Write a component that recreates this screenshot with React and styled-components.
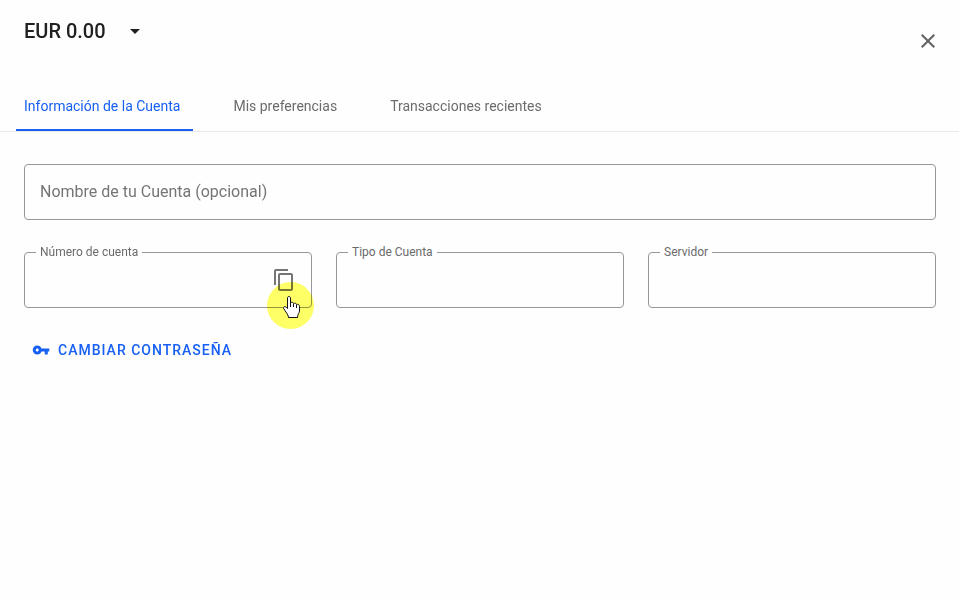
import styled, { createGlobalStyle } from "styled-components";
import { MdArrowDropDown, MdClose, MdContentCopy, MdVpnKey } from "react-icons/md";

const blue = "#1760f3";
const grey = "#6b6b6b";
const outline = "#979797";

const GlobalStyle = createGlobalStyle`
  *,
  *::before,
  *::after {
    box-sizing: border-box;
  }

  body {
    margin: 0;
    background-color: #fefefe;
    font-family: Roboto, "Liberation Sans", sans-serif;
  }

  button,
  input {
    font-family: inherit;
  }
`;

const Page = styled.main`
  min-height: 100vh;
`;

const Header = styled.header`
  display: flex;
  justify-content: space-between;
  align-items: flex-start;
  padding: 16px 19px 0 24px;
`;

const PlainButton = styled.button`
  display: flex;
  align-items: center;
  padding: 0;
  border: 0;
  background: none;
  cursor: pointer;
`;

const AccountButton = styled(PlainButton)`
  gap: 17px;
  color: #212121;
  font-size: 20px;
  font-weight: 500;
  line-height: 30px;
`;

const CloseButton = styled(PlainButton)`
  margin-top: 13px;
  color: #616161;
`;

const Tabs = styled.nav`
  display: flex;
  gap: 32px;
  margin-top: 28px;
  padding: 0 16px;
  border-bottom: 1px solid #e9e9e9;
`;

const Tab = styled.button`
  height: 50px;
  padding: 2px 13px 0 8px;
  border: 0;
  border-bottom: 2px solid ${({ $active }) => ($active ? blue : "transparent")};
  background: none;
  color: ${({ $active }) => ($active ? blue : grey)};
  font-size: 14px;
  cursor: pointer;
`;

const Content = styled.section`
  padding: 32px 23px 32px 24px;
`;

const Row = styled.div`
  display: grid;
  grid-template-columns: repeat(3, 1fr);
  gap: 24px;
  margin-top: 32px;
`;

const Field = styled.div`
  position: relative;
  display: flex;
  align-items: center;
  height: 56px;
  padding: 0 15px;
  border: 1px solid ${outline};
  border-radius: 4px;
`;

/* Sits on the top border and hides the part under the text */
const Label = styled.label`
  position: absolute;
  top: -9px;
  left: 11px;
  padding: 0 4px;
  background-color: #fefefe;
  color: ${grey};
  font-size: 12px;
  line-height: 16px;
`;

const Input = styled.input`
  flex: 1;
  min-width: 0;
  height: 100%;
  padding: 0 0 2px;
  border: 0;
  outline: 0;
  background: none;
  color: #212121;
  font-size: 16px;

  &::placeholder {
    color: #757575;
    opacity: 1;
  }
`;

const CopyButton = styled(PlainButton)`
  position: relative;
  color: #757575;
`;

const Highlight = styled.span`
  position: absolute;
  top: 14px;
  left: -5px;
  width: 47px;
  height: 47px;
  border-radius: 50%;
  background-color: #ffff66;
  mix-blend-mode: multiply;
`;

const Pointer = styled.svg`
  position: absolute;
  top: 27px;
  left: 10px;
  width: 20px;
  height: 24px;
`;

const PasswordButton = styled(PlainButton)`
  gap: 8px;
  height: 36px;
  margin-top: 24px;
  padding: 0 8px;
  color: ${blue};
  font-size: 14px;
  font-weight: 500;
  letter-spacing: 1px;
  text-transform: uppercase;
`;

const tabs = ["Información de la Cuenta", "Mis preferencias", "Transacciones recientes"];

function HandPointer() {
  return (
    <Pointer viewBox="0 0 20 24" aria-hidden="true">
      <path
        d="M5.5 13.5V3C5.500 1 8.500 1 8.500 3V7.500C10 6.800 11.500 7.500 11.500 8.500C13 7.800 14.500 8.500 14.500 9.500C16 8.800 17.500 9.800 17.500 11.500V16C17.500 18 15.500 19 15.500 22.500H6.500C6.500 19.500 3.500 17 1.700 13.500C1.200 11.500 3 10.500 5.500 13.500Z"
        fill="#fff"
        stroke="#111"
      />
      <path d="M8.500 7V12M11.500 9V12M14.500 10V13M6.500 22.500H15.500" fill="none" stroke="#111" />
    </Pointer>
  );
}

export default function App() {
  return (
    <Page>
      <GlobalStyle />
      <Header>
        <AccountButton type="button">
          EUR 0.00
          <MdArrowDropDown size={24} />
        </AccountButton>
        <CloseButton type="button" aria-label="Cerrar">
          <MdClose size={24} />
        </CloseButton>
      </Header>
      <Tabs>
        {tabs.map((tab, i) => (
          <Tab type="button" key={tab} $active={i === 0}>
            {tab}
          </Tab>
        ))}
      </Tabs>
      <Content>
        <Field>
          <Input aria-label="Nombre de tu Cuenta" placeholder="Nombre de tu Cuenta (opcional)" />
        </Field>
        <Row>
          <Field>
            <Label htmlFor="number">Número de cuenta</Label>
            <Input id="number" readOnly />
            <CopyButton type="button" aria-label="Copiar">
              <MdContentCopy size={24} />
              <Highlight />
              <HandPointer />
            </CopyButton>
          </Field>
          <Field>
            <Label htmlFor="type">Tipo de Cuenta</Label>
            <Input id="type" readOnly />
          </Field>
          <Field>
            <Label htmlFor="server">Servidor</Label>
            <Input id="server" readOnly />
          </Field>
        </Row>
        <PasswordButton type="button">
          <MdVpnKey size={18} />
          Cambiar contraseña
        </PasswordButton>
      </Content>
    </Page>
  );
}
